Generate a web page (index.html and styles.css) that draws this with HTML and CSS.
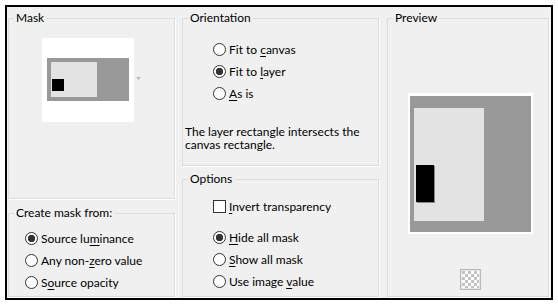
FILE: index.html
```html
<!DOCTYPE html>
<html lang="en">
<head>
    <meta charset="UTF-8">
    <title>Mask</title>
    <link rel="stylesheet" href="styles.css">
</head>
<body>
    <div class="dialog">
        <div class="col col-mask">
            <fieldset class="group mask-group">
                <legend>Mask</legend>
                <div class="mask-picker">
                    <svg class="mask-thumb" width="92" height="84" viewBox="0 0 92 84">
                        <rect width="92" height="84" fill="#fff"/>
                        <rect x="5" y="20" width="82" height="43" fill="#999"/>
                        <rect x="9" y="24" width="46" height="35" fill="#e3e3e3"/>
                        <rect x="10" y="41" width="12" height="12" fill="#000"/>
                    </svg>
                    <svg class="picker-arrow" width="5" height="3" viewBox="0 0 5 3">
                        <path d="M0 0h5L2.5 3z" fill="#b8b8b8"/>
                    </svg>
                </div>
            </fieldset>
            <fieldset class="group source-group">
                <legend>Create mask from:</legend>
                <div class="options">
                    <label class="option"><input type="radio" name="source" checked><span>Source lu<u>m</u>inance</span></label>
                    <label class="option"><input type="radio" name="source"><span>Any non-<u>z</u>ero value</span></label>
                    <label class="option"><input type="radio" name="source"><span>S<u>o</u>urce opacity</span></label>
                </div>
            </fieldset>
        </div>

        <div class="col col-orient">
            <fieldset class="group orient-group">
                <legend>Orientation</legend>
                <div class="options">
                    <label class="option"><input type="radio" name="orient"><span>Fit to <u>c</u>anvas</span></label>
                    <label class="option"><input type="radio" name="orient" checked><span>Fit to <u>l</u>ayer</span></label>
                    <label class="option"><input type="radio" name="orient"><span><u>A</u>s is</span></label>
                </div>
                <p class="note">The layer rectangle intersects the canvas rectangle.</p>
            </fieldset>
            <fieldset class="group options-group">
                <legend>Options</legend>
                <div class="options">
                    <label class="option"><input type="checkbox"><span><u>I</u>nvert transparency</span></label>
                </div>
                <div class="options mask-mode">
                    <label class="option"><input type="radio" name="mode" checked><span><u>H</u>ide all mask</span></label>
                    <label class="option"><input type="radio" name="mode"><span><u>S</u>how all mask</span></label>
                    <label class="option"><input type="radio" name="mode"><span>Use image <u>v</u>alue</span></label>
                </div>
            </fieldset>
        </div>

        <div class="col col-preview">
            <fieldset class="group preview-group">
                <legend>Preview</legend>
                <svg class="preview" width="125" height="141" viewBox="0 0 125 141">
                    <rect width="125" height="141" fill="#fff"/>
                    <rect x="2" y="3" width="121" height="136" fill="#999"/>
                    <rect x="6" y="15" width="70" height="113" fill="#e3e3e3"/>
                    <rect x="9" y="73" width="18" height="37" fill="#888"/>
                    <rect x="8" y="72" width="18" height="37" fill="#000"/>
                </svg>
                <svg class="checker" width="21" height="21" viewBox="0 0 21 21">
                    <defs>
                        <pattern id="cells" width="6" height="6" patternUnits="userSpaceOnUse" x="2" y="2">
                            <rect width="6" height="6" fill="#fff"/>
                            <rect width="3" height="3" fill="#c2c2c2"/>
                            <rect x="3" y="3" width="3" height="3" fill="#c2c2c2"/>
                        </pattern>
                    </defs>
                    <rect x="0.5" y="0.5" width="20" height="20" fill="#e6e6e6" stroke="#b9b9b9"/>
                    <rect x="2" y="2" width="17" height="17" fill="url(#cells)"/>
                </svg>
            </fieldset>
        </div>
    </div>
</body>
</html>
```

FILE: styles.css
```css
body {
    margin: 0;
    background-color: #fff;
    font-family: Lato, "Noto Sans", sans-serif;
    font-size: 12px;
    color: #000;
}
.dialog {
    margin: 5px;
    width: 548px;
    height: 295px;
    box-sizing: border-box;
    border: 2px solid #000;
    background-color: #f0f0f0;
    display: flex;
    padding: 4px 0 0 1px;
}
.col {
    display: flex;
    flex-direction: column;
}
.col-mask {
    width: 167px;
    margin-right: 7px;
}
.col-orient {
    width: 197px;
    margin-right: 8px;
}
.col-preview {
    width: 162px;
}
.group {
    margin: 0;
    padding: 0 2px;
    min-width: 0;
    box-sizing: border-box;
    border: 1px solid #dcdcdc;
    box-shadow: 1px 1px 0 #fff;
}
.group legend {
    padding: 0 2px;
    margin-left: 3px;
    line-height: 14px;
}
.mask-group {
    height: 188px;
}
.source-group {
    height: 91px;
    margin-top: 7px;
}
.orient-group {
    height: 155px;
}
.options-group {
    height: 125px;
    margin-top: 6px;
}
.preview-group {
    height: 286px;
    display: flex;
    flex-direction: column;
    align-items: center;
}
.mask-picker {
    margin-top: 13px;
    display: flex;
    justify-content: center;
    align-items: center;
    gap: 2px;
}
.mask-thumb, .picker-arrow, .preview, .checker {
    display: block;
}
.picker-arrow {
    margin-top: -4px;
}
.options {
    display: flex;
    flex-direction: column;
}
.source-group .options {
    margin-top: 7px;
    padding-left: 14px;
}
.orient-group .options {
    margin-top: 13px;
    padding-left: 28px;
}
.options-group .options {
    margin-top: 9px;
    padding-left: 28px;
}
.options-group .mask-mode {
    margin-top: 9px;
}
.option {
    height: 22px;
    display: flex;
    align-items: center;
    white-space: nowrap;
}
.option u {
    text-underline-offset: 2px;
}
.option input {
    appearance: none;
    -webkit-appearance: none;
    width: 13px;
    height: 13px;
    margin: 0 3px 0 0;
    box-sizing: border-box;
    border: 1px solid #333;
    background-color: #fff;
    flex-shrink: 0;
}
.option input[type="radio"] {
    border-radius: 50%;
}
.option input[type="radio"]:checked {
    background: radial-gradient(circle, #333 0, #333 3.4px, #fff 4px);
}
.note {
    margin: 21px 0 0;
    line-height: 13px;
}
.preview {
    margin-top: 68px;
    margin-left: 4px;
}
.checker {
    margin-top: 35px;
    margin-left: 4px;
}
```
